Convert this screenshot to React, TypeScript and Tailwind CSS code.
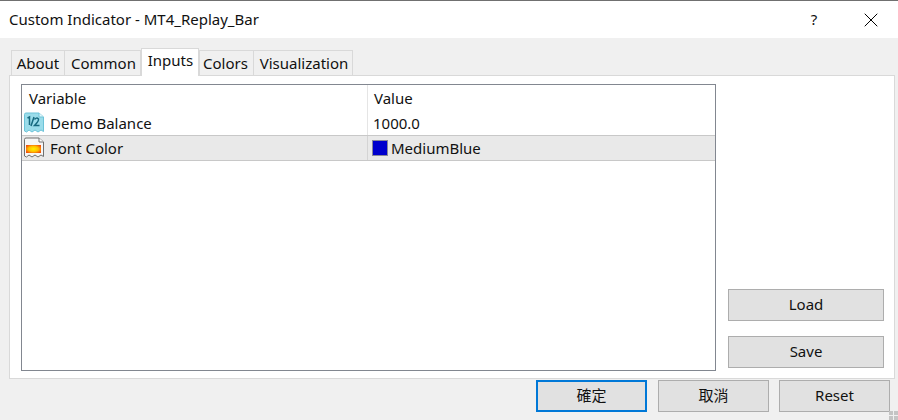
import { X } from "lucide-react";

const tabs = [
  { label: "About", width: "w-[54px] -mr-px" },
  { label: "Common", width: "w-[77px] pl-[2px]" },
  { label: "Inputs", width: "w-[58px] pl-[1px]", active: true },
  { label: "Colors", width: "w-[55px] -mr-px pr-[2px]" },
  { label: "Visualization", width: "w-[100px] pl-[2px]" },
];

function BalanceIcon() {
  return (
    <svg width="22" height="22" viewBox="0 0 22 22" className="shrink-0">
      <path d="M1.5 2.5 Q1.5 1 3 1 H16 L20.5 5 V19.5 L18 18 L15 20 L12 18 L9 20 L6 18 L3.5 20 L1.5 19 Z" fill="#9adcea" stroke="#6cc3d8" />
      <path d="M16 1 V5 H20.5" fill="#e4f7fb" stroke="#6cc3d8" />
      <path d="M4.5 6 L6.5 5 V13 M8 14 L11 5 M11.5 7.5 Q13.5 5 15.5 7 Q16 9 11.5 13.5 H16.5" fill="none" stroke="#16697f" strokeWidth="1.5" />
    </svg>
  );
}

function ColorIcon() {
  return (
    <svg width="22" height="22" viewBox="0 0 22 22" className="shrink-0">
      <defs>
        <radialGradient id="flame" cx="0.5" cy="0.5" r="0.6">
          <stop offset="0" stopColor="#fff200" />
          <stop offset="0.55" stopColor="#ffc000" />
          <stop offset="1" stopColor="#f0500c" />
        </radialGradient>
      </defs>
      <path d="M1.5 2.5 Q1.5 1 3 1 H16 L20.5 5 V19.5 L18 18 L15 20 L12 18 L9 20 L6 18 L3.5 20 L1.5 19 Z" fill="#f6f6f6" stroke="#6f6f6f" />
      <path d="M16 1 V5 H20.5" fill="#ffffff" stroke="#6f6f6f" />
      <rect x="3" y="8" width="15" height="8" fill="url(#flame)" />
    </svg>
  );
}

function Button({ label, className }: { label: string; className: string }) {
  return (
    <button className={`h-[32px] pb-[2px] bg-[#e1e1e1] text-[15px] text-[#111] flex items-center justify-center ${className}`}>
      {label}
    </button>
  );
}

export default function App() {
  return (
    <div
      className="w-[898px] h-[420px] overflow-hidden bg-[#f0f0f0] flex flex-col text-[15px] text-[#111] relative"
      style={{ fontFamily: '"Noto Sans", "Noto Sans CJK TC", sans-serif' }}
    >
      <div className="h-[38px] shrink-0 bg-white border-t border-[#707070] flex items-center pl-[9px]">
        <span className="flex-1">Custom Indicator - MT4_Replay_Bar</span>
        <span className="w-[10px] text-center mr-[40px]">?</span>
        <X size={24} strokeWidth={1} className="mr-[15px] text-black" />
      </div>

      <div className="flex items-end pl-[11px] h-[37px] shrink-0">
        {tabs.map((tab) =>
          tab.active ? (
            <div
              key={tab.label}
              className={`${tab.width} h-[28px] -mb-px relative z-10 bg-white border border-b-0 border-[#d9d9d9] text-center leading-[23px]`}
            >
              {tab.label}
            </div>
          ) : (
            <div
              key={tab.label}
              className={`${tab.width} h-[25px] bg-[#f0f0f0] border border-b-0 border-[#d9d9d9] text-center leading-[24px]`}
            >
              {tab.label}
            </div>
          ),
        )}
      </div>

      <div className="ml-[9px] mr-[3px] h-[304px] shrink-0 bg-white border border-[#d9d9d9] flex pl-[11px] pt-[8px] pr-[10px]">
        <div className="w-[695px] h-[287px] border border-[#828790] bg-white flex flex-col">
          <div className="h-[26px] flex shrink-0 items-center">
            <div className="w-[346px] pl-[7px] border-r border-[#e5e5e5] h-full flex items-center">Variable</div>
            <div className="pl-[6px]">Value</div>
          </div>
          <div className="h-[25px] flex shrink-0 items-center border-b border-[#c8c8c8]">
            <div className="w-[346px] pl-[1px] border-r border-[#e5e5e5] h-full flex items-center gap-[5px]">
              <BalanceIcon />
              <span>Demo Balance</span>
            </div>
            <div className="pl-[5px]">1000.0</div>
          </div>
          <div className="h-[25px] flex shrink-0 items-center bg-[#e9e9e9] border-b border-[#c8c8c8]">
            <div className="w-[346px] pl-[1px] border-r border-[#d4d4d4] h-full flex items-center gap-[5px]">
              <ColorIcon />
              <span>Font Color</span>
            </div>
            <div className="pl-[4px] flex items-center gap-[3px]">
              <span className="w-[16px] h-[16px] bg-[#0000cd] border border-[#8a8a9a]" />
              <span>MediumBlue</span>
            </div>
          </div>
        </div>
        <div className="flex-1 flex flex-col justify-end items-end gap-[15px] pb-[10px]">
          <Button label="Load" className="w-[156px] border border-[#adadad]" />
          <Button label="Save" className="w-[156px] border border-[#adadad]" />
        </div>
      </div>

      <div className="flex justify-end pr-[8px] pt-[1px] gap-[10px]">
        <Button label="確定" className="w-[111px] border-2 border-[#0078d7] mr-px" />
        <Button label="取消" className="w-[111px] border border-[#adadad]" />
        <Button label="Reset" className="w-[111px] border border-[#adadad]" />
      </div>

      <div className="absolute right-0 bottom-0 w-[9px] h-[9px] grid grid-cols-2 gap-px">
        <span className="bg-[#c4c4c4]" />
        <span className="bg-[#c4c4c4]" />
        <span className="bg-[#c4c4c4]" />
        <span className="bg-[#c4c4c4]" />
      </div>
    </div>
  );
}
